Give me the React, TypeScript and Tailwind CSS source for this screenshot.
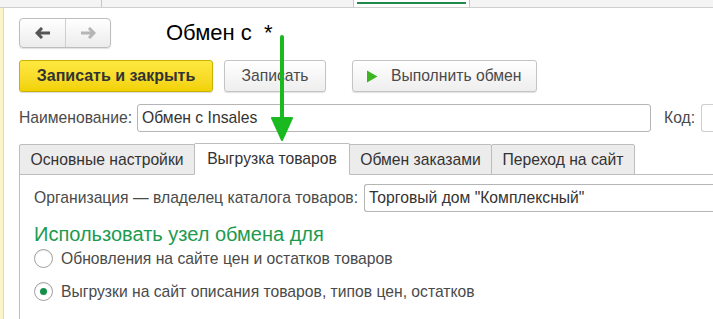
import React, { useState } from 'react';

const Radio: React.FC<{ checked: boolean; label: string; onClick: () => void }> = ({ checked, label, onClick }) => (
  <button onClick={onClick} className="flex items-center h-[33px] text-left">
    <span className="w-[19px] h-[19px] rounded-full border border-[#a0a0a0] bg-white flex items-center justify-center shadow-[inset_0_1px_1px_rgba(0,0,0,0.08)]">
      {checked && <span className="w-[7px] h-[7px] rounded-full bg-[#14904a]" />}
    </span>
    <span className="ml-[8px] text-[15.7px] text-[#4a4a4a]">{label}</span>
  </button>
);

const tabs = ['Основные настройки', 'Выгрузка товаров', 'Обмен заказами', 'Переход на сайт'];
const tabWidths = ['w-[176px]', 'w-[156px]', 'w-[143px]', 'w-[144px]'];

const App: React.FC = () => {
  const [tab, setTab] = useState(1);
  const [mode, setMode] = useState(1);

  return (
    <div className="relative w-[713px] h-[319px] overflow-hidden bg-white font-['Liberation_Sans',Arial,sans-serif] text-[#4a4a4a]">
      {/* Strip of the outer window tabs */}
      <div className="flex h-[8px] bg-[#f4f4f4] border-b border-[#cfcfcf]">
        <div className="w-[102px] border-r border-[#c8c8c8]" />
        <div className="w-[252px] border-r border-[#c8c8c8]" />
        <div className="w-[116px] border-r border-[#c8c8c8] bg-white pt-[2px] pl-[3px]">
          <div className="w-[109px] h-[2px] bg-[#1f8a4c]" />
        </div>
      </div>

      <div className="flex h-[311px]">
        <div className="w-[4px] bg-[#fbf4c8] border-r border-[#e8dc98]" />

        <div className="flex-1 pl-[15px] flex flex-col">
          {/* Navigation + title */}
          <div className="flex items-center mt-[10px] h-[30px]">
            <div className="flex w-[92px] h-[30px] rounded-[4px] border border-[#bdbdbd] bg-gradient-to-b from-white to-[#ececec] shadow-[0_1px_1px_rgba(0,0,0,0.12)]">
              <button className="w-[46px] flex items-center justify-center border-r border-[#cfcfcf]">
                <svg width="16" height="12" viewBox="0 0 16 12"><path d="M7 1 2 6l5 5M2 6h13" fill="none" stroke="#555" strokeWidth="3" /></svg>
              </button>
              <button className="flex-1 flex items-center justify-center">
                <svg width="16" height="12" viewBox="0 0 16 12"><path d="M9 1l5 5-5 5M14 6H1" fill="none" stroke="#b5b5b5" strokeWidth="3" /></svg>
              </button>
            </div>
            <h1 className="ml-[55px] text-[22px] text-black leading-none whitespace-pre">Обмен с  *</h1>
          </div>

          {/* Command bar */}
          <div className="flex items-center mt-[12px] h-[32px]">
            <button className="w-[194px] h-[32px] rounded-[3px] border border-[#c9b200] bg-gradient-to-b from-[#ffe840] to-[#f2d200] text-[16px] font-bold text-[#333] shadow-[0_1px_1px_rgba(0,0,0,0.15)]">
              Записать и закрыть
            </button>
            <button className="ml-[11px] w-[102px] h-[32px] rounded-[3px] border border-[#c4c4c4] bg-gradient-to-b from-white to-[#eeeeee] text-[15.7px] text-[#4a4a4a] shadow-[0_1px_1px_rgba(0,0,0,0.12)]">
              Записать
            </button>
            <button className="ml-[26px] w-[185px] h-[32px] rounded-[3px] border border-[#c4c4c4] bg-gradient-to-b from-white to-[#eeeeee] text-[15.7px] text-[#4a4a4a] flex items-center shadow-[0_1px_1px_rgba(0,0,0,0.12)]">
              <svg className="ml-[13px]" width="12" height="13" viewBox="0 0 12 13"><path d="M1 0.5 11.5 6.5 1 12.5z" fill="#3cb521" /></svg>
              <span className="ml-[13px]">Выполнить обмен</span>
            </button>
          </div>

          {/* Name row */}
          <div className="flex items-center mt-[12px] h-[28px]">
            <span className="text-[15.7px] w-[118px]">Наименование:</span>
            <div className="w-[514px] h-[28px] rounded-[3px] border border-[#b5b5b5] bg-white px-[4px] flex items-center text-[15.7px] text-[#333]">
              Обмен с Insales
            </div>
            <span className="ml-[13px] text-[15.7px] w-[37px]">Код:</span>
            <div className="flex-1 h-[28px] rounded-l-[3px] border border-r-0 border-[#cfcfcf] bg-white" />
          </div>

          {/* Tabs */}
          <div className="flex mt-[11px] h-[32px] items-end">
            {tabs.map((t, i) => (
              <button
                key={t}
                onClick={() => setTab(i)}
                className={`${tabWidths[i]} h-[31px] -ml-px first:ml-0 text-[15.7px] text-[#333] border border-[#bdbdbd] rounded-t-[2px] flex items-center justify-center ${tab === i ? 'bg-white border-b-white relative z-10 h-[32px]' : 'bg-[#ececec]'}`}
              >
                {t}
              </button>
            ))}
            <div className="flex-1 border-b border-[#bdbdbd]" />
          </div>

          {/* Tab panel */}
          <div className="flex-1 -mt-px border-l border-t border-[#bdbdbd] pl-[14px] pt-[9px]">
            <div className="flex items-center h-[28px]">
              <span className="text-[15.7px] w-[330px]">Организация — владелец каталога товаров:</span>
              <div className="flex-1 h-[28px] rounded-l-[3px] border border-r-0 border-[#b5b5b5] bg-white px-[4px] flex items-center text-[15.7px] text-[#333]">
                Торговый дом "Комплексный"
              </div>
            </div>
            <h2 className="mt-[11px] text-[20px] leading-[22px] text-[#1c9a4e]">Использовать узел обмена для</h2>
            <div className="flex flex-col -mt-[3px]">
              <Radio checked={mode === 0} onClick={() => setMode(0)} label="Обновления на сайте цен и остатков товаров" />
              <Radio checked={mode === 1} onClick={() => setMode(1)} label="Выгрузки на сайт описания товаров, типов цен, остатков" />
            </div>
          </div>
        </div>
      </div>

      {/* Annotation arrow */}
      <svg className="absolute left-[270px] top-[34px] pointer-events-none" width="24" height="110" viewBox="0 0 24 110">
        <path d="M12 3V88" stroke="#19b91f" strokeWidth="4" strokeLinecap="round" />
        <path d="M2 84h20L12 106z" fill="#19b91f" stroke="#19b91f" strokeWidth="2" strokeLinejoin="round" />
      </svg>
    </div>
  );
};

export default App;
